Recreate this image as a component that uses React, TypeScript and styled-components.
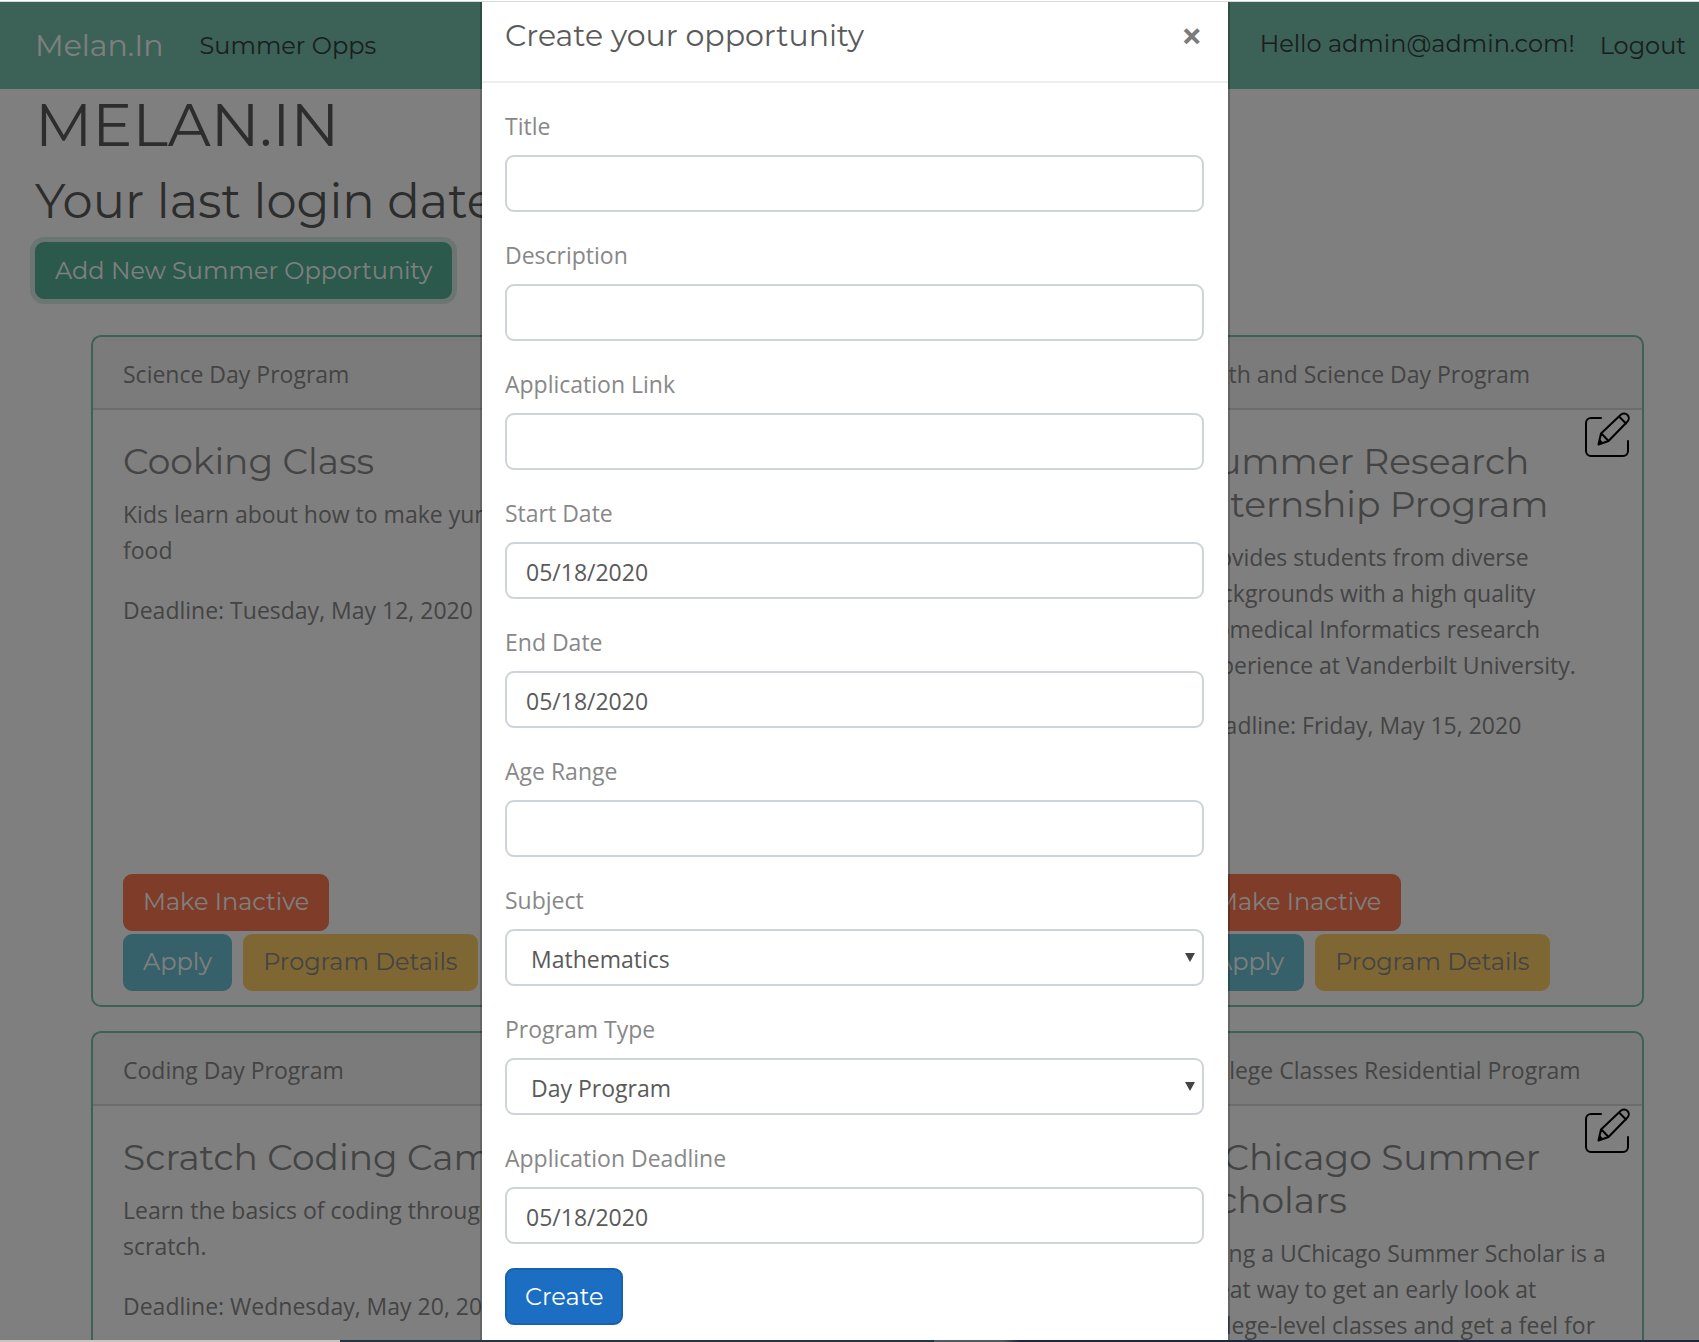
import React from "react";
import styled, { createGlobalStyle } from "styled-components";

const display = `Montserrat, Inter, "Open Sans", sans-serif`;
const body = `"Segoe UI", "Open Sans", "Noto Sans", sans-serif`;

const Global = createGlobalStyle`
  *, *::before, *::after { box-sizing: border-box; }
  body {
    margin: 0;
    background: #fff;
    color: #888;
    font: 400 23px/36px ${body};
  }
  h1, h2, h3, h4, p { margin: 0; }
  h1, h2, h3, h4 { font-family: ${display}; font-weight: 400; }
  button, input, select { font: inherit; }
`;

const Screen = styled.div`
  display: flex;
  flex-direction: column;
  height: 100vh;
  overflow: hidden;
`;
const TopEdge = styled.div`
  flex: none;
  height: 2px;
  background: #fff;
  border-bottom: 1px solid #d6dad8;
`;
const BottomEdge = styled.div`
  flex: none;
  height: 2px;
  background: linear-gradient(90deg, #c8c4c4 20%, #213642 20%, #213642 55%, #4d5b66 55%, #4d5b66 59%, #1c2840 60%);
`;
const Viewport = styled.div`
  position: relative;
  flex: 1;
  min-height: 0;
  overflow: hidden;
`;

const Navbar = styled.nav`
  display: flex;
  align-items: center;
  height: 87px;
  padding: 0 13px 0 35px;
  background: #78c2ad;
  font: 400 24px/36px ${display};
`;
const Brand = styled.a`
  margin-right: 36px;
  color: #fff;
  font-size: 30px;
  text-decoration: none;
`;
const NavLink = styled.a`
  color: #343a40;
  text-decoration: none;
`;
const Account = styled.div`
  display: flex;
  gap: 25px;
  margin-left: auto;
`;
const Greeting = styled.span`
  color: #343a40;
  line-height: 32px;
`;

const Intro = styled.header`
  padding: 0 35px;
`;
const SiteTitle = styled.h1`
  margin-bottom: 11px;
  color: #5a5a5a;
  font-size: 60px;
  line-height: 72px;
`;
const LastLogin = styled.h2`
  margin-bottom: 12px;
  color: #5a5a5a;
  font-size: 48px;
  line-height: 58px;
  white-space: nowrap;
`;

type Tone = "primary" | "danger" | "info" | "warning" | "create";
const tones: Record<Tone, { bg: string; fg: string; border?: string }> = {
  primary: { bg: "#56b299", fg: "#fff" },
  danger: { bg: "#ff7851", fg: "#fff" },
  info: { bg: "#6cc3d5", fg: "#fff" },
  warning: { bg: "#ffce67", fg: "#888" },
  create: { bg: "#1b6ec2", fg: "#fff", border: "#1861ac" },
};
const Button = styled.button<{ $tone: Tone; $ring?: boolean }>`
  height: 57px;
  padding: 0 18px;
  border: 2px solid ${(p) => tones[p.$tone].border ?? tones[p.$tone].bg};
  border-radius: 9px;
  background: ${(p) => tones[p.$tone].bg};
  color: ${(p) => tones[p.$tone].fg};
  font: 400 24px/36px ${display};
  white-space: nowrap;
  box-shadow: ${(p) => (p.$ring ? "0 0 0 5px rgba(120, 194, 173, 0.3)" : "none")};
`;

const Cards = styled.main`
  display: grid;
  grid-template-columns: repeat(3, 1fr);
  gap: 24px 55px;
  padding: 36px 55px 36px 91px;
`;
const CardBox = styled.article`
  position: relative;
  display: flex;
  flex-direction: column;
  min-height: 672px;
  border: 2px solid #78c2ad;
  border-radius: 10px;
`;
const CardHeader = styled.div`
  padding: 19px 30px 16px;
  border-bottom: 2px solid rgba(0, 0, 0, 0.125);
  background: rgba(0, 0, 0, 0.03);
`;
const CardBody = styled.div`
  display: flex;
  flex: 1;
  flex-direction: column;
  padding: 30px 30px 14px;
`;
const CardTitle = styled.h4`
  margin-bottom: 13px;
  color: #888;
  font-size: 36px;
  line-height: 43px;
`;
const Text = styled.p`
  margin-bottom: 24px;
`;
const Actions = styled.div`
  display: flex;
  flex-wrap: wrap;
  gap: 0 11px;
  margin-top: auto;

  button {
    padding: 0 18px 1px;
  }
`;
const Break = styled.span`
  flex-basis: 100%;
  height: 3px;
`;
const EditButton = styled.button`
  position: absolute;
  top: 75px;
  right: 12px;
  width: 46px;
  height: 46px;
  padding: 0;
  border: 0;
  background: none;
  color: #000;
  svg { display: block; }
`;

const Backdrop = styled.div`
  position: absolute;
  inset: 0;
  display: flex;
  justify-content: center;
  align-items: flex-start;
  padding-left: 11px;
  background: rgba(0, 0, 0, 0.5);
`;
const Modal = styled.section`
  width: 750px;
  min-height: 100%;
  border: solid rgba(0, 0, 0, 0.2);
  border-width: 0 2px;
  background: #fff;
  background-clip: padding-box;
`;
const ModalHeader = styled.header`
  display: flex;
  align-items: center;
  justify-content: space-between;
  padding: 11px 24px 23px 23px;
  border-bottom: 2px solid #eee;
`;
const ModalTitle = styled.h3`
  color: #5a5a5a;
  font-size: 30px;
  line-height: 45px;
`;
const Close = styled.button`
  padding: 0 2px;
  border: 0;
  background: none;
  color: #7b7b7b;
  font: 700 36px/36px ${body};
`;
const Form = styled.form`
  display: grid;
  justify-items: start;
  gap: 24px;
  padding: 24px 24px 24px 23px;
`;
const Field = styled.div`
  display: grid;
  gap: 11px;
  width: 100%;
`;
const Label = styled.label`
  padding-top: 1px;
`;
const control = `
  width: 100%;
  height: 57px;
  border: 2px solid #ced4da;
  border-radius: 9px;
  background: #fff;
  color: #5a5a5a;
`;
const Input = styled.input`
  ${control}
  padding: 2px 19px 0;
`;
const SelectWrap = styled.div`
  position: relative;
`;
const Select = styled.select`
  ${control}
  display: block;
  padding: 2px 24px 0;
  appearance: none;
`;
const Arrow = styled.svg`
  position: absolute;
  top: 24px;
  right: 9px;
  pointer-events: none;
`;

const PencilSquare = () => (
  <svg width="46" height="46" viewBox="0 0 46 46" fill="none" stroke="currentColor" strokeWidth="2" strokeLinecap="round" strokeLinejoin="round">
    <path d="M17 6H7a5 5 0 0 0-5 5v28a5 5 0 0 0 5 5h32a5 5 0 0 0 5-5V29" />
    <path d="M14.500 32.500l2.500-11L36.500 3a4.800 4.800 0 0 1 7 0 4.800 4.800 0 0 1 0 6.500L24.500 29zM17.500 21.500l7 7.500M35 4.500l7 7M14.500 32l3.500-1-2-2.500z" />
  </svg>
);

interface Opportunity {
  kind: string;
  title: string;
  text: string;
  deadline: string;
}
const opportunities: Opportunity[] = [
  { kind: "Science Day Program", title: "Cooking Class", text: "Kids learn about how to make yummy food", deadline: "Tuesday, May 12, 2020" },
  { kind: "Day Program", title: "Summer Program", text: "", deadline: "" },
  {
    kind: "Math and Science Day Program",
    title: "Summer Research Internship Program",
    text: "Provides students from diverse backgrounds with a high quality Biomedical Informatics research experience at Vanderbilt University.",
    deadline: "Friday, May 15, 2020",
  },
  { kind: "Coding Day Program", title: "Scratch Coding Camp", text: "Learn the basics of coding through scratch.", deadline: "Wednesday, May 20, 2020" },
  { kind: "Day Program", title: "Summer Program", text: "", deadline: "" },
  {
    kind: "College Classes Residential Program",
    title: "UChicago Summer Scholars",
    text: "Being a UChicago Summer Scholar is a great way to get an early look at college-level classes and get a feel for",
    deadline: "",
  },
];

function Card({ item }: { item: Opportunity }) {
  return (
    <CardBox>
      <CardHeader>{item.kind}</CardHeader>
      <EditButton type="button" aria-label={`Edit ${item.title}`}>
        <PencilSquare />
      </EditButton>
      <CardBody>
        <CardTitle>{item.title}</CardTitle>
        <Text>{item.text}</Text>
        {item.deadline && <Text>Deadline: {item.deadline}</Text>}
        <Actions>
          <Button type="button" $tone="danger">Make Inactive</Button>
          <Break />
          <Button type="button" $tone="info">Apply</Button>
          <Button type="button" $tone="warning">Program Details</Button>
        </Actions>
      </CardBody>
    </CardBox>
  );
}

const fields: { id: string; label: string; value?: string; options?: string[] }[] = [
  { id: "title", label: "Title" },
  { id: "description", label: "Description" },
  { id: "link", label: "Application Link" },
  { id: "start", label: "Start Date", value: "05/18/2020" },
  { id: "end", label: "End Date", value: "05/18/2020" },
  { id: "age", label: "Age Range" },
  { id: "subject", label: "Subject", options: ["Mathematics"] },
  { id: "type", label: "Program Type", options: ["Day Program"] },
  { id: "deadline", label: "Application Deadline", value: "05/18/2020" },
];

export default function App() {
  return (
    <Screen>
      <Global />
      <TopEdge />
      <Viewport>
        <Navbar>
          <Brand href="#">Melan.In</Brand>
          <NavLink href="#">Summer Opps</NavLink>
          <Account>
            <Greeting>Hello admin@admin.com!</Greeting>
            <NavLink href="#">Logout</NavLink>
          </Account>
        </Navbar>
        <Intro>
          <SiteTitle>MELAN.IN</SiteTitle>
          <LastLogin>Your last login date</LastLogin>
          <Button type="button" $tone="primary" $ring>Add New Summer Opportunity</Button>
        </Intro>
        <Cards>
          {opportunities.map((item, i) => (
            <Card key={i} item={item} />
          ))}
        </Cards>
        <Backdrop>
          <Modal role="dialog" aria-modal="true" aria-labelledby="modal-title">
            <ModalHeader>
              <ModalTitle id="modal-title">Create your opportunity</ModalTitle>
              <Close type="button" aria-label="Close">×</Close>
            </ModalHeader>
            <Form onSubmit={(e) => e.preventDefault()}>
              {fields.map((f) => (
                <Field key={f.id}>
                  <Label htmlFor={f.id}>{f.label}</Label>
                  {f.options ? (
                    <SelectWrap>
                      <Select id={f.id}>
                        {f.options.map((o) => (
                          <option key={o}>{o}</option>
                        ))}
                      </Select>
                      <Arrow width="10" height="9" viewBox="0 0 10 9" aria-hidden="true">
                        <path d="M0 0h10L5 9z" fill="#444" />
                      </Arrow>
                    </SelectWrap>
                  ) : (
                    <Input id={f.id} type="text" defaultValue={f.value} />
                  )}
                </Field>
              ))}
              <Button type="submit" $tone="create">Create</Button>
            </Form>
          </Modal>
        </Backdrop>
      </Viewport>
      <BottomEdge />
    </Screen>
  );
}
